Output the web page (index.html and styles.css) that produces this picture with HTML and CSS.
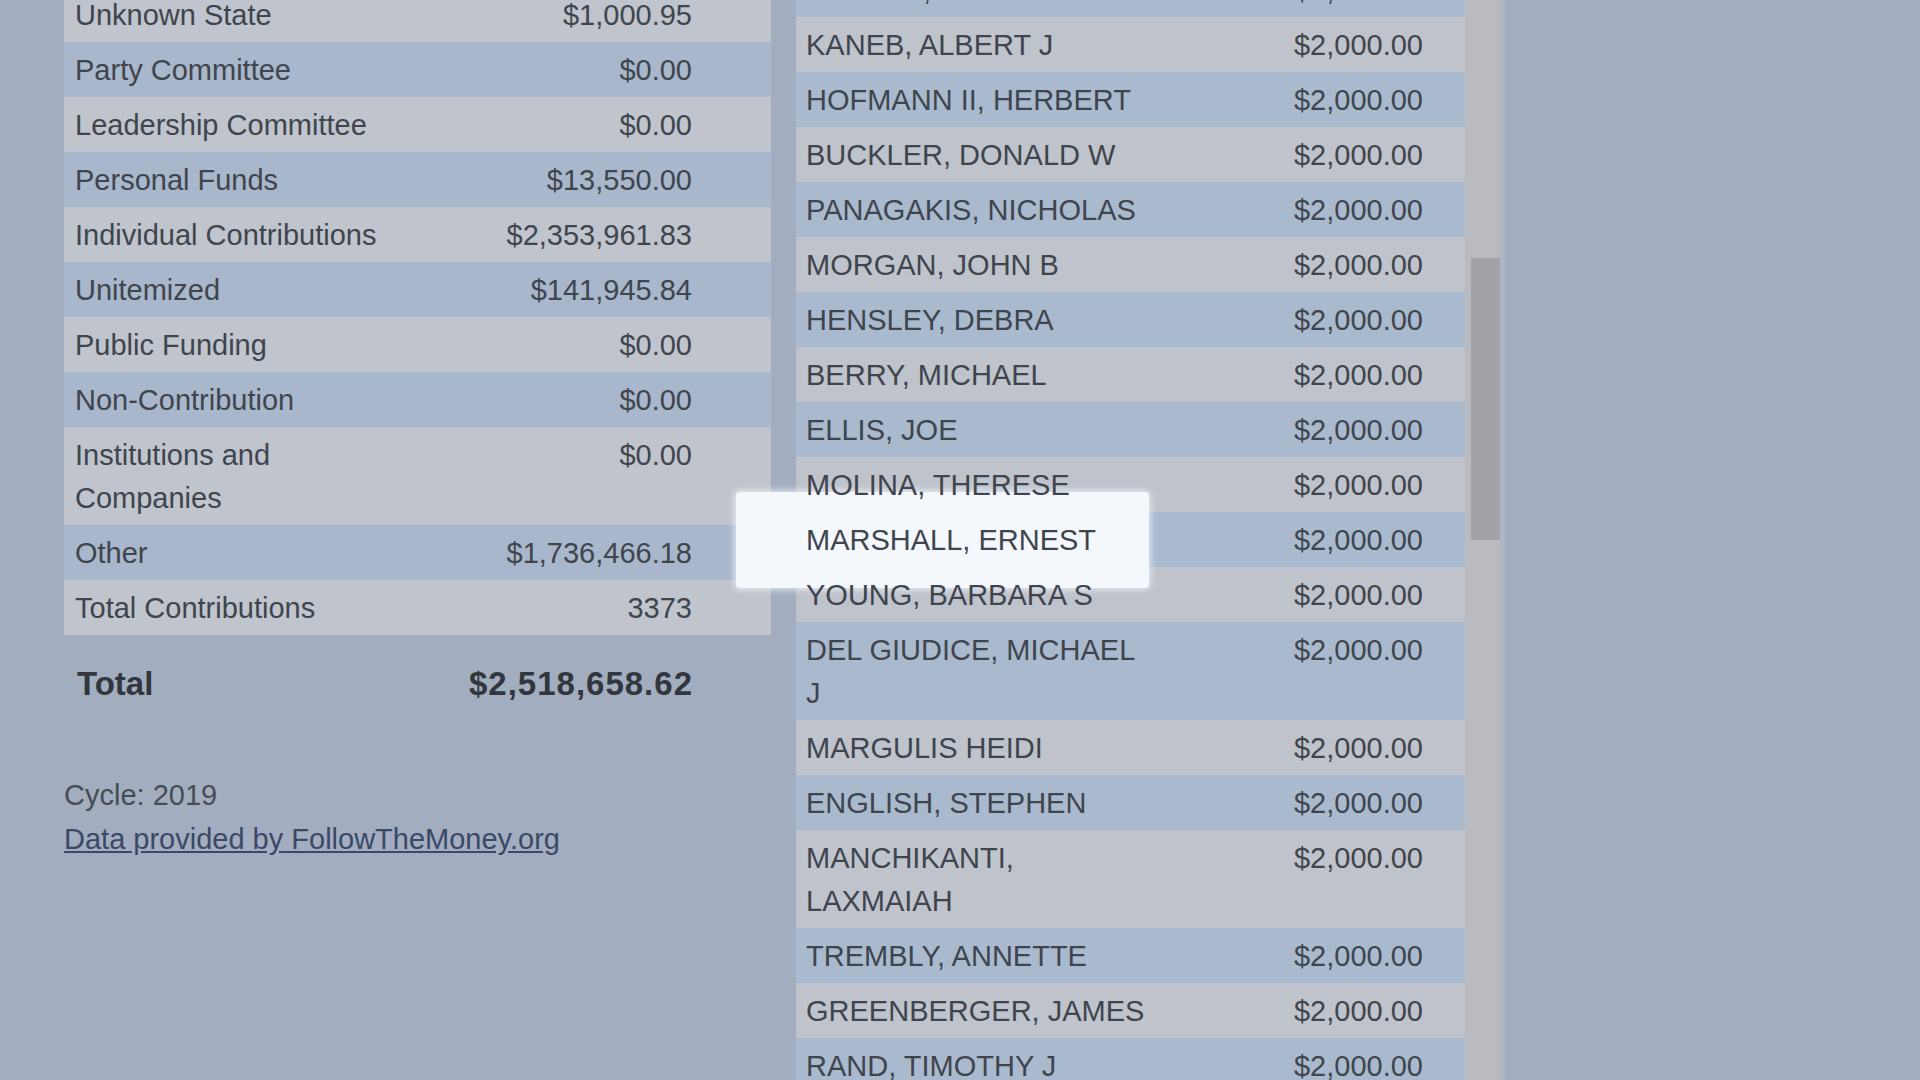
FILE: index.html
```html
<!DOCTYPE html>
<html lang="en">
<head>
<meta charset="utf-8">
<title>Contributions</title>
<link rel="stylesheet" href="styles.css">
</head>
<body>
<main class="page">
  <section class="summary">
    <div class="srow light"><span class="label">Unknown State</span><span class="amt">$1,000.95</span></div>
    <div class="srow dark"><span class="label">Party Committee</span><span class="amt">$0.00</span></div>
    <div class="srow light"><span class="label">Leadership Committee</span><span class="amt">$0.00</span></div>
    <div class="srow dark"><span class="label">Personal Funds</span><span class="amt">$13,550.00</span></div>
    <div class="srow light"><span class="label">Individual Contributions</span><span class="amt">$2,353,961.83</span></div>
    <div class="srow dark"><span class="label">Unitemized</span><span class="amt">$141,945.84</span></div>
    <div class="srow light"><span class="label">Public Funding</span><span class="amt">$0.00</span></div>
    <div class="srow dark"><span class="label">Non-Contribution</span><span class="amt">$0.00</span></div>
    <div class="srow light"><span class="label">Institutions and Companies</span><span class="amt">$0.00</span></div>
    <div class="srow dark"><span class="label">Other</span><span class="amt">$1,736,466.18</span></div>
    <div class="srow light"><span class="label">Total Contributions</span><span class="amt">3373</span></div>
    <div class="total"><span class="label">Total</span><span class="amt">$2,518,658.62</span></div>
    <p class="cycle">Cycle: 2019<br><a href="#" class="source">Data provided by FollowTheMoney.org</a></p>
  </section>

  <section class="donors">
    <div class="donor-list">
      <div class="dtable">
        <div class="drow dark"><span class="name">RATNER, ROBERT</span><span class="amt">$2,000.00</span></div>
        <div class="drow light"><span class="name">KANEB, ALBERT J</span><span class="amt">$2,000.00</span></div>
        <div class="drow dark"><span class="name">HOFMANN II, HERBERT</span><span class="amt">$2,000.00</span></div>
        <div class="drow light"><span class="name">BUCKLER, DONALD W</span><span class="amt">$2,000.00</span></div>
        <div class="drow dark"><span class="name">PANAGAKIS, NICHOLAS</span><span class="amt">$2,000.00</span></div>
        <div class="drow light"><span class="name">MORGAN, JOHN B</span><span class="amt">$2,000.00</span></div>
        <div class="drow dark"><span class="name">HENSLEY, DEBRA</span><span class="amt">$2,000.00</span></div>
        <div class="drow light"><span class="name">BERRY, MICHAEL</span><span class="amt">$2,000.00</span></div>
        <div class="drow dark"><span class="name">ELLIS, JOE</span><span class="amt">$2,000.00</span></div>
        <div class="drow light"><span class="name">MOLINA, THERESE</span><span class="amt">$2,000.00</span></div>
        <div class="drow dark focus"><span class="spot"></span><span class="name">MARSHALL, ERNEST</span><span class="amt">$2,000.00</span></div>
        <div class="drow light"><span class="name">YOUNG, BARBARA S</span><span class="amt">$2,000.00</span></div>
        <div class="drow dark"><span class="name">DEL GIUDICE, MICHAEL J</span><span class="amt">$2,000.00</span></div>
        <div class="drow light"><span class="name">MARGULIS HEIDI</span><span class="amt">$2,000.00</span></div>
        <div class="drow dark"><span class="name">ENGLISH, STEPHEN</span><span class="amt">$2,000.00</span></div>
        <div class="drow light"><span class="name">MANCHIKANTI, LAXMAIAH</span><span class="amt">$2,000.00</span></div>
        <div class="drow dark"><span class="name">TREMBLY, ANNETTE</span><span class="amt">$2,000.00</span></div>
        <div class="drow light"><span class="name">GREENBERGER, JAMES</span><span class="amt">$2,000.00</span></div>
        <div class="drow dark"><span class="name">RAND, TIMOTHY J</span><span class="amt">$2,000.00</span></div>
      </div>
    </div>
    <div class="scrollbar"><div class="thumb"></div></div>
  </section>
</main>
</body>
</html>
```

FILE: styles.css
```css
html, body {
  margin: 0;
  padding: 0;
  height: 100%;
}

body {
  background: #a2aec0;
  color: #40454d;
  font-family: "Liberation Sans", Arial, sans-serif;
  font-size: 29px;
  line-height: 43px;
  overflow: hidden;
}

.page {
  display: flex;
  align-items: flex-start;
  height: 1080px;
  overflow: hidden;
}

/* ---------- left summary ---------- */
.summary {
  width: 707px;
  margin-left: 64px;
  margin-top: -13px;
  flex: none;
}

.srow {
  display: flex;
  align-items: flex-start;
  padding: 7px 0 5px;
}

.srow .label {
  width: 320px;
  padding-left: 11px;
  flex: none;
}

.srow .amt {
  flex: 1;
  text-align: right;
  padding-right: 79px;
}

.light { background: #bfc4cd; }
.dark  { background: #a8b7cb; }

.label, .amt, .name {
  position: relative;
  z-index: 2;
}

.total {
  display: flex;
  margin-top: 27px;
  font-weight: bold;
  font-size: 33px;
  color: #32363d;
}

.total .label {
  padding-left: 13px;
}

.total .amt {
  flex: 1;
  text-align: right;
  padding-right: 78px;
  letter-spacing: 1px;
}

.cycle {
  margin: 68px 0 0 0;
  line-height: 44px;
  color: #474c55;
}

.source {
  color: #3b4866;
  text-decoration: underline;
}

/* ---------- right donor list ---------- */
.donors {
  display: flex;
  margin-left: 25px;
  height: 1080px;
  flex: none;
}

.donor-list {
  width: 669px;
  height: 1080px;
}

.dtable {
  margin-top: -38px;
}

.drow {
  display: flex;
  align-items: flex-start;
  padding: 7px 0 5px;
}

.drow.dark { background: #a9bacf; }
.drow.light { background: #bec3cc; }

.drow .name {
  width: 345px;
  padding-left: 10px;
  flex: none;
}

.drow .amt {
  flex: 1;
  text-align: right;
  padding-right: 42px;
}

.focus {
  position: relative;
}

.spot {
  position: absolute;
  left: -60px;
  top: -20px;
  width: 413px;
  height: 96px;
  background: #f4f7fc;
  border-radius: 4px;
  box-shadow: 0 0 6px 2px rgba(244, 247, 252, 0.7);
  z-index: 1;
}

.scrollbar {
  width: 40px;
  height: 1080px;
  background: #b9bbc1;
  border-right: 5px solid #adb6c2;
  box-sizing: border-box;
  padding-left: 6px;
  flex: none;
}

.thumb {
  width: 29px;
  height: 282px;
  margin-top: 258px;
  background: #a1a3a7;
}
```
